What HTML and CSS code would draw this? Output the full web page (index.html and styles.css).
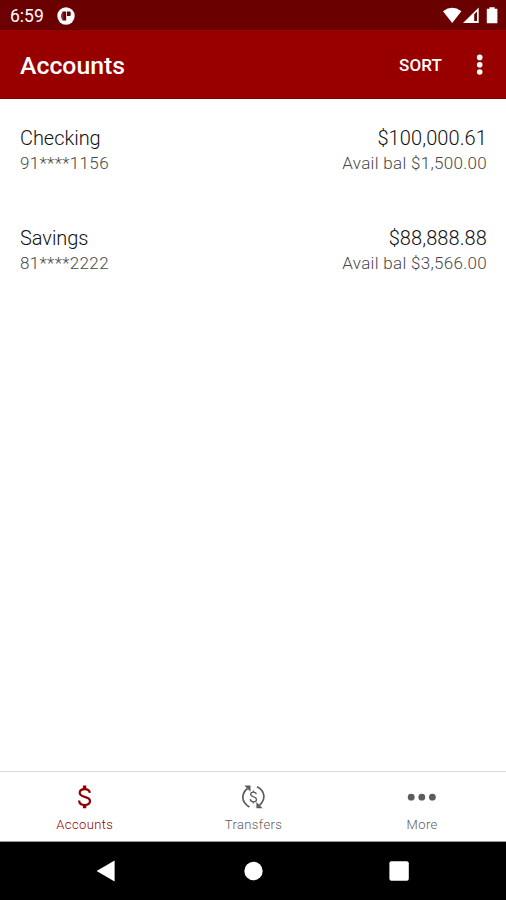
FILE: index.html
```html
<!DOCTYPE html>
<html lang="en">
<head>
<meta charset="utf-8">
<title>Accounts</title>
<link rel="stylesheet" href="styles.css">
</head>
<body>
<div class="screen">
  <div class="status">
    <span class="clock">6:59</span>
    <svg class="notice" width="18" height="18" viewBox="0 0 18 18"><circle cx="9" cy="9" r="8.7" fill="#fff"/><path d="M5.5 4.500h3.700v9H5.500q-2.600-4.500 0-9z" fill="#6b0000"/><path d="M10 4.500h2.700q1 0 1 1v2.400q0 1-1 1H10z" fill="#6b0000"/><path d="M5.800 5v8" stroke="#a76060" stroke-width=".7"/></svg>
    <svg class="signals" width="56" height="18" viewBox="0 0 56 18" fill="#fff"><path d="M0 4.200Q9.200-2.700 18.400 4.200L9.200 16z"/><path fill-rule="evenodd" d="M35.700.5V16H20zM31.200 7.200V14H34V4.600z"/><path d="M46.500.2h5.200v1.600h2.700v14.400h-10.600V1.800h2.700z"/></svg>
  </div>
  <header class="appbar">
    <h1 class="title">Accounts</h1>
    <span class="sort">SORT</span>
    <svg class="overflow" width="8" height="22" viewBox="0 0 8 22" fill="#fff"><circle cx="3.700" cy="3.400" r="2.800"/><circle cx="3.700" cy="10.700" r="2.800"/><circle cx="3.700" cy="18" r="2.800"/></svg>
  </header>
  <main class="list">
    <section class="account">
      <div class="row primary"><span class="name">Checking</span><span class="amount">$100,000.61</span></div>
      <div class="row secondary"><span class="number">91****1156</span><span class="avail">Avail bal $1,500.00</span></div>
    </section>
    <section class="account">
      <div class="row primary"><span class="name">Savings</span><span class="amount">$88,888.88</span></div>
      <div class="row secondary"><span class="number">81****2222</span><span class="avail">Avail bal $3,566.00</span></div>
    </section>
  </main>
  <nav class="tabs">
    <div class="tab active">
      <svg width="30" height="26" viewBox="0 0 30 26" fill="none" stroke="currentColor" stroke-width="2.200"><path d="M20.800 8.800C20.500 6.400 18.500 5.100 15.700 5.100s-5 1.400-5 3.700c0 2.500 2.100 3.300 5 4.100 3.100.8 5.300 1.700 5.300 4.200 0 2.400-2.100 3.900-5.200 3.900-3.300 0-5.600-1.600-5.700-4.500"/><path stroke-width="3.400" d="M15.600 1.600v3.600M15.600 20.800v3.400"/></svg>
      <span>Accounts</span>
    </div>
    <div class="tab">
      <svg width="30" height="26" viewBox="0 0 30 26" fill="none" stroke="currentColor" stroke-width="1.700"><path d="M9.500 4.500C3.200 9.500 2.800 18 11.500 23M19 2.800C27.500 7 27.800 15.500 21.500 21.300"/><path d="M6.300 1.600h6.200v6.200zM24.600 24.200h-6.200V18z" fill="currentColor" stroke="none"/><path stroke-width="1.300" d="M18.300 10.200c-.2-1.400-1.200-2.100-2.800-2.100-1.700 0-2.800.8-2.800 2.200 0 1.500 1.200 2 2.800 2.500 1.800.5 3 1.100 3 2.600s-1.200 2.400-3 2.400c-1.900 0-3.100-1-3.200-2.700M15.400 6.400v1.800M15.400 17.700v1.800"/></svg>
      <span>Transfers</span>
    </div>
    <div class="tab">
      <svg width="30" height="26" viewBox="0 0 30 26" fill="#5c5c5c"><circle cx="4.200" cy="13.200" r="3.400"/><circle cx="14.800" cy="13.200" r="3.400"/><circle cx="25.400" cy="13.200" r="3.400"/></svg>
      <span>More</span>
    </div>
  </nav>
  <div class="system">
    <svg width="20" height="22" viewBox="0 0 20 22" fill="#fff"><path d="M.6 11L18.600.5v21z"/></svg>
    <svg width="20" height="20" viewBox="0 0 20 20" fill="#fff"><circle cx="10.500" cy="10" r="9.200"/></svg>
    <svg width="20" height="20" viewBox="0 0 20 20" fill="#fff"><rect x=".4" y=".3" width="19.400" height="19.400" rx="2"/></svg>
  </div>
</div>
</body>
</html>
```
FILE: styles.css
```css
* { box-sizing: border-box; }
body { margin: 0; font-family: Roboto, sans-serif; background: #fff; }
svg { display: block; flex: none; }
.screen { width: 506px; height: 900px; display: flex; flex-direction: column; }
.status { height: 30px; flex: none; background: #6b0000; color: #fff; display: flex; align-items: center; padding: 2px 7px 0 10px; }
.clock { width: 47px; font-size: 17.5px; line-height: 20px; }
.signals { margin-left: auto; }
.appbar { height: 69px; flex: none; background: #980000; border-bottom: 1px solid #850000; color: #fff; display: flex; align-items: center; padding: 0 22px 0 20px; }
.title { margin: 3px auto 0 0; font-size: 24.8px; line-height: 30px; font-weight: 500; }
.sort { font-size: 17px; line-height: 22px; font-weight: 500; margin: 1px 34px 0 0; letter-spacing: .1px; }
.overflow { margin-top: 2px; }
.list { flex: 1; padding: 26px 19px 0 20px; }
.account { height: 100px; }
.row { display: flex; justify-content: space-between; }
.primary { color: #111; font-size: 20px; line-height: 26px; font-weight: 300; }
.name { letter-spacing: -.05px; }
.amount { letter-spacing: .1px; }
.secondary { color: #484848; font-size: 17px; line-height: 24px; font-weight: 300; letter-spacing: .3px; }
.number { letter-spacing: .35px; }
.tabs { height: 71px; flex: none; border-top: 1px solid #dadada; border-bottom: 1px solid #999; display: grid; grid-template-columns: repeat(3, 1fr); color: #5c5c5c; }
.tab { display: flex; flex-direction: column; align-items: center; padding-top: 12px; font-size: 13px; line-height: 18px; font-weight: 300; letter-spacing: .4px; }
.tab span { margin: 6px 0 0 1px; }
.active { color: #900000; }
.system { height: 58px; flex: none; background: #000; display: flex; align-items: center; justify-content: space-between; padding: 0 97px 0 96px; }
```
